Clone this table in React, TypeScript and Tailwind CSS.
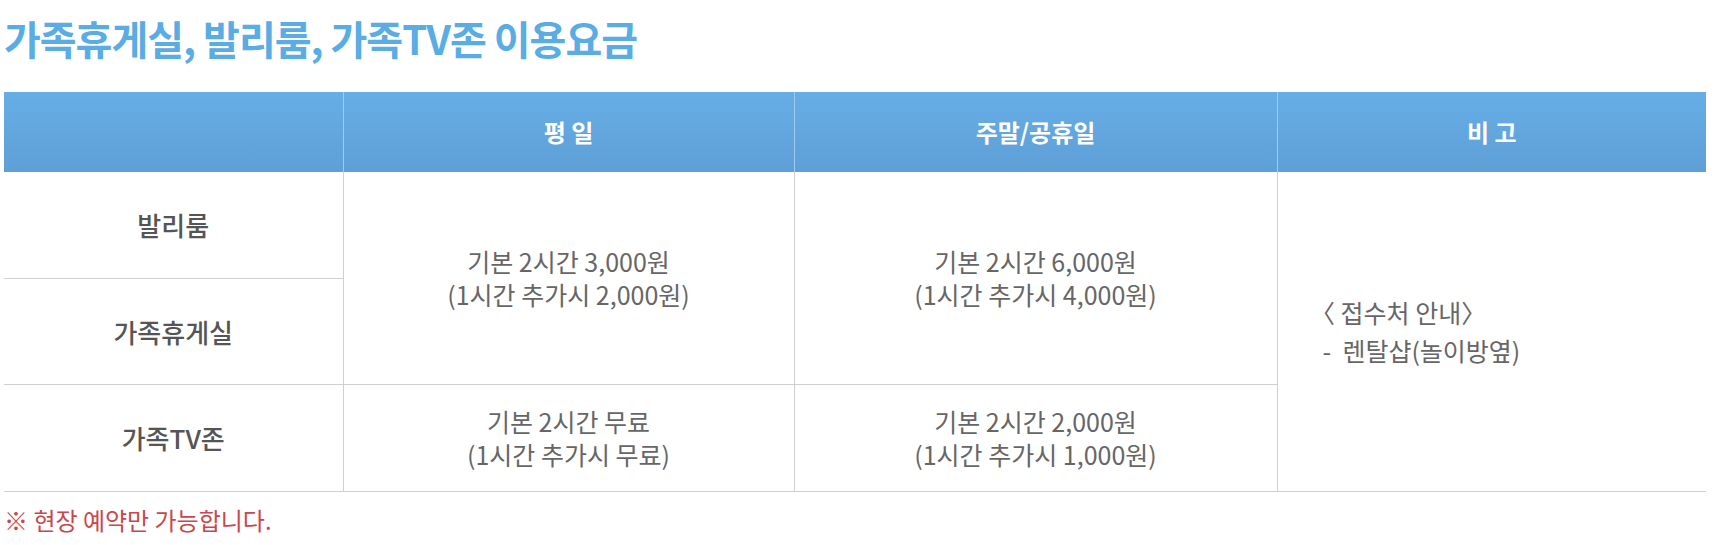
const font = "font-['Noto_Sans_CJK_KR','Noto_Sans',sans-serif]";

const App = () => {
  return (
    <div className={`w-[1716px] h-[545px] bg-white ${font}`}>
      <h2 className="h-[76px] pl-[4px] flex items-center text-[40px] font-bold tracking-[-1px] text-[#5aace4]">
        가족휴게실, 발리룸, 가족TV존 이용요금
      </h2>
      <table className="mt-[16px] ml-[4px] w-[1702px] border-collapse table-fixed">
        <colgroup>
          <col className="w-[339px]" />
          <col className="w-[451px]" />
          <col className="w-[483px]" />
          <col className="w-[429px]" />
        </colgroup>
        <thead>
          <tr className="h-[80px] bg-gradient-to-b from-[#67aee6] to-[#5e9fd6] text-white text-[24px] font-medium">
            <th className="border-r border-[#9fcbef]"></th>
            <th className="border-r border-[#9fcbef]">평 일</th>
            <th className="border-r border-[#9fcbef]">주말/공휴일</th>
            <th>비 고</th>
          </tr>
        </thead>
        <tbody className="text-[25px] text-[#666]">
          <tr className="h-[106px]">
            <td className="border-r border-b border-[#cfcfcf] text-center text-[26px] font-medium text-[#555]">발리룸</td>
            <td rowSpan={2} className="border-r border-b border-[#cfcfcf] text-center leading-[33px]">
              기본 2시간 3,000원
              <br />
              (1시간 추가시 2,000원)
            </td>
            <td rowSpan={2} className="border-r border-b border-[#cfcfcf] text-center leading-[33px]">
              기본 2시간 6,000원
              <br />
              (1시간 추가시 4,000원)
            </td>
            <td rowSpan={3} className="border-b border-[#cfcfcf] pl-[45px] leading-[38px]">
              <span className="[font-feature-settings:'halt']">〈</span> 접수처 안내
              <span className="[font-feature-settings:'halt']">〉</span>
              <br />
              -&nbsp;&nbsp;렌탈샵(놀이방옆)
            </td>
          </tr>
          <tr className="h-[106px]">
            <td className="border-r border-b border-[#cfcfcf] text-center text-[26px] font-medium text-[#555]">가족휴게실</td>
          </tr>
          <tr className="h-[107px]">
            <td className="border-r border-b border-[#cfcfcf] text-center text-[26px] font-medium text-[#555]">가족TV존</td>
            <td className="border-r border-b border-[#cfcfcf] text-center leading-[33px]">
              기본 2시간 무료
              <br />
              (1시간 추가시 무료)
            </td>
            <td className="border-r border-b border-[#cfcfcf] text-center leading-[33px]">
              기본 2시간 2,000원
              <br />
              (1시간 추가시 1,000원)
            </td>
          </tr>
        </tbody>
      </table>
      <p className="mt-[10px] pl-[4px] text-[24px] leading-[36px] text-[#c9474b]">※ 현장 예약만 가능합니다.</p>
    </div>
  );
};

export default App;
